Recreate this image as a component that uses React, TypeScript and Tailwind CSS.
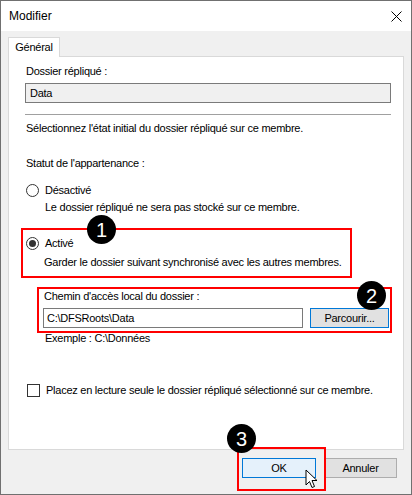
import React from "react";

const Badge = ({ n, className }: { n: string; className: string }) => (
  <div
    className={`absolute w-[29px] h-[29px] rounded-full bg-black text-white flex items-center justify-center text-[20px] leading-none tracking-normal ${className}`}
  >
    {n}
  </div>
);

const Radio = ({ checked }: { checked?: boolean }) => (
  <div className="w-[13px] h-[13px] rounded-full border border-[#333333] bg-white flex items-center justify-center shrink-0">
    {checked && <div className="w-[7px] h-[7px] rounded-full bg-[#333333]" />}
  </div>
);

export default function App() {
  return (
    <div
      className="relative w-[412px] h-[495px] border border-[#707070] bg-[#f0f0f0] flex flex-col text-[11px] leading-[15px] tracking-[-0.25px] text-black overflow-hidden whitespace-nowrap"
      style={{ fontFamily: '"Liberation Sans", Arial, sans-serif' }}
    >
      {/* Title bar */}
      <div className="h-[30px] bg-white flex items-center justify-between pl-[8px] pr-[9px] shrink-0">
        <span className="text-[12px] tracking-normal">Modifier</span>
        <svg width="11" height="11" viewBox="0 0 11 11">
          <path d="M0.5 0.5 L10.5 10.5 M10.5 0.5 L0.5 10.5" stroke="#000" strokeWidth="1" />
        </svg>
      </div>

      {/* Body */}
      <div className="px-[7px] pt-[6px] flex flex-col">
        {/* Tab */}
        <div className="relative z-10 w-[52px] h-[20px] bg-white border border-b-0 border-[#d9d9d9] flex items-center justify-center -mb-px">
          <span>Général</span>
        </div>
        {/* Panel */}
        <div className="w-[396px] h-[394px] bg-white border border-[#d9d9d9] flex flex-col px-[16px]">
          <div className="mt-[7px] pl-[1px]">Dossier répliqué :</div>
          <div className="mt-[4px] h-[20px] w-[366px] border border-[#7a7a7a] bg-[#f0f0f0] flex items-center pl-[4px]">
            Data
          </div>
          <div className="mt-[11px] h-px w-[366px] bg-[#a0a0a0]" />
          <div className="mt-[6px] pl-[1px]">Sélectionnez l'état initial du dossier répliqué sur ce membre.</div>
          <div className="mt-[20px] pl-[1px]">Statut de l'appartenance :</div>
          <div className="mt-[12px] flex items-center gap-[6px] pl-[1px]">
            <Radio />
            <span>Désactivé</span>
          </div>
          <div className="mt-[2px] pl-[20px]">Le dossier répliqué ne sera pas stocké sur ce membre.</div>

          {/* Red box 1 */}
          <div className="relative mt-[13px] -ml-[4px] w-[331px] h-[50px] border-2 border-[#ff0000] pl-[3px] flex flex-col">
            <div className="mt-[6px] flex items-center gap-[6px]">
              <Radio checked />
              <span>Activé</span>
            </div>
            <div className="mt-[4px] pl-[18px]">Garder le dossier suivant synchronisé avec les autres membres.</div>
            <Badge n="1" className="left-[64px] -top-[15px]" />
          </div>

          {/* Red box 2 */}
          <div className="relative mt-[9px] ml-[12px] w-[355px] h-[46px] border-2 border-[#ff0000] pl-[4px] pr-px flex flex-col">
            <div className="pl-[1px]">Chemin d'accès local du dossier :</div>
            <div className="mt-[4px] flex gap-[7px]">
              <div className="h-[20px] w-[260px] border border-[#7a7a7a] bg-white flex items-center pl-[3px]">
                C:\DFSRoots\Data
              </div>
              <div className="h-[20px] w-[79px] border border-[#0078d7] bg-[#e1e1e1] flex items-center justify-center">
                Parcourir...
              </div>
            </div>
            <Badge n="2" className="left-[318px] -top-[8px]" />
          </div>
          <div className="-mt-[2px] pl-[20px]">Exemple : C:\Données</div>

          <div className="mt-[37px] flex items-center gap-[6px] pl-[2px]">
            <div className="w-[13px] h-[13px] border border-[#333333] bg-white shrink-0" />
            <span>Placez en lecture seule le dossier répliqué sélectionné sur ce membre.</span>
          </div>
        </div>
      </div>

      {/* Buttons */}
      <div className="mt-[8px] flex justify-end gap-[8px] pr-[14px]">
        <div className="h-[20px] w-[74px] border border-[#0078d7] bg-[#e5f1fb] flex items-center justify-center">
          OK
        </div>
        <div className="h-[20px] w-[73px] border border-[#adadad] bg-[#e1e1e1] flex items-center justify-center">
          Annuler
        </div>
      </div>

      {/* Red box 3 overlay */}
      <div className="absolute left-[236px] top-[446px] w-[89px] h-[44px] border-2 border-[#ff0000]" />
      <Badge n="3" className="left-[226px] top-[423px]" />

      {/* Cursor */}
      <svg className="absolute left-[304px] top-[468px]" width="14" height="21" viewBox="0 0 14 21">
        <path
          d="M1 1 L1 16 L4.5 12.5 L7 18.5 L9.5 17.5 L7 11.5 L12 11.5 Z"
          fill="#fff"
          stroke="#000"
          strokeWidth="1"
          strokeLinejoin="miter"
        />
      </svg>
    </div>
  );
}
